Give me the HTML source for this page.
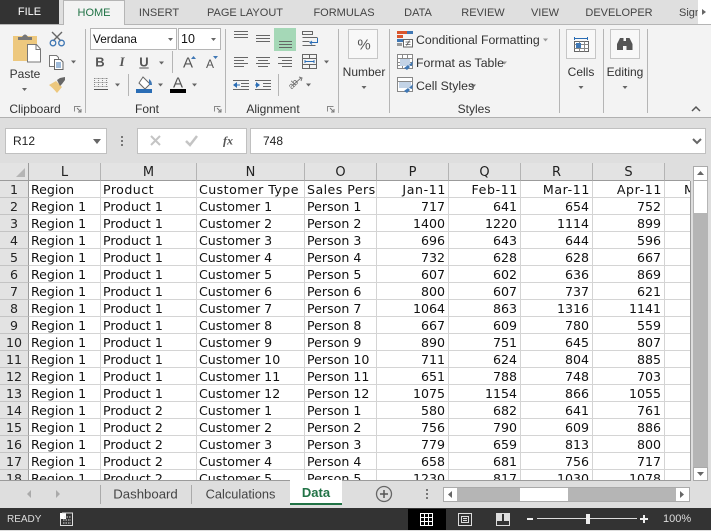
<!DOCTYPE html>
<html><head><meta charset="utf-8">
<style>
html,body{margin:0;padding:0;width:711px;height:530px;overflow:hidden;background:#dedede;font-family:"Liberation Sans",sans-serif;color:#333}
.a{position:absolute;white-space:nowrap}
.t{position:absolute;top:0;height:25px;line-height:26px;font-size:11px;color:#444;transform:translateX(-50%);white-space:nowrap}
.r{position:absolute;font-size:12px;color:#333;white-space:nowrap;transform:translate(-50%,-50%)}
.l{position:absolute;font-size:12.3px;color:#333;white-space:nowrap;transform:translateY(-50%)}
#grid{position:absolute;left:0;top:163px;width:690px;height:317px;overflow:hidden;background:#fff}
table{border-collapse:separate;border-spacing:0;table-layout:fixed;width:692px;font-family:"DejaVu Sans",Verdana,sans-serif;font-size:12.6px;color:#111}
th{background:#e3e3e3;font-weight:normal;height:18px;padding:2px 0 0;border-right:1px solid #b4b4b4;border-bottom:1px solid #9b9b9b;font-size:13px;line-height:15px;text-align:center;color:#222;box-sizing:border-box}
td{height:17px;box-sizing:border-box;padding:2px 2px 0;border-right:1px solid #d4d4d4;border-bottom:1px solid #d4d4d4;overflow:hidden;white-space:nowrap;line-height:14px}
td.h{background:#e3e3e3;text-align:center;padding:2px 0 0;border-right:1px solid #9b9b9b;border-bottom:1px solid #c4c4c4;color:#222}
td.n{text-align:right;padding-right:3px}
td.d{text-align:right;padding-right:2px;letter-spacing:.6px}
td.w{letter-spacing:.45px}
</style></head><body>

<!-- tab strip -->
<div class="a" style="left:0;top:0;width:711px;height:25px;background:#dfdfdf"></div>
<div class="a" style="left:0;top:0;width:59px;height:25px;background:#333;color:#fff;font-size:11px;line-height:25px;text-align:center">FILE</div>
<div class="a" style="left:63px;top:0;width:60px;height:25px;background:#f3f3f3;border:1px solid #b5b5b5;border-bottom:none"></div>
<div class="t" style="left:94px;color:#217346">HOME</div>
<div class="t" style="left:159px">INSERT</div>
<div class="t" style="left:245px">PAGE LAYOUT</div>
<div class="t" style="left:344px">FORMULAS</div>
<div class="t" style="left:418px">DATA</div>
<div class="t" style="left:483px">REVIEW</div>
<div class="t" style="left:545px">VIEW</div>
<div class="t" style="left:619px">DEVELOPER</div>
<div class="t" style="left:690px">Sign</div>
<div class="a" style="left:698px;top:0;width:13px;height:24px;background:#fff"></div>

<!-- ribbon -->
<div class="a" style="left:0;top:24px;width:63px;height:1px;background:#b5b5b5"></div>
<div class="a" style="left:125px;top:24px;width:586px;height:1px;background:#b5b5b5"></div>
<div class="a" style="left:0;top:25px;width:711px;height:92px;background:#f3f3f3;border-bottom:1px solid #b0b0b0"></div>
<div class="a" style="left:64px;top:24px;width:59px;height:2px;background:#f3f3f3"></div>

<svg class="a" style="left:0;top:0" width="711" height="120" viewBox="0 0 711 120" fill="none">
<!-- separators -->
<g fill="#b5b5b5">
<rect x="85" y="29" width="1" height="84"/><rect x="225" y="29" width="1" height="84"/><rect x="338" y="29" width="1" height="84"/><rect x="389" y="29" width="1" height="84"/><rect x="559" y="29" width="1" height="84"/><rect x="603" y="29" width="1" height="84"/><rect x="647" y="29" width="1" height="84"/>
<rect x="172" y="51" width="1" height="22"/><rect x="128" y="74" width="1" height="22"/><rect x="278" y="74" width="1" height="22"/>
</g>
<!-- tab scroll arrow -->
<path d="M702 9l4 3-4 3z" fill="#666"/>
<!-- paste -->
<rect x="13" y="36" width="24" height="25" fill="#edc87e"/>
<path d="M18 40v-3h4q3-5 6 0h4v3z" fill="#777"/>
<path d="M27.500 44.500h9l4 4.500v13h-13z" fill="#fff" stroke="#777"/>
<path d="M36 44.500v5h4.500" stroke="#777"/>
<!-- scissors -->
<path d="M52 32l9 9M62 32l-9 9" stroke="#666" stroke-width="1.400"/>
<circle cx="53" cy="43" r="2.800" stroke="#3f77b4" stroke-width="1.300"/><circle cx="61.500" cy="43" r="2.800" stroke="#3f77b4" stroke-width="1.300"/>
<!-- copy -->
<path d="M49.500 55.500h7l2 2v9h-9z" fill="#fff" stroke="#777"/>
<path d="M54.500 59.500h6l2.500 2.500v7.500h-8.500z" fill="#fff" stroke="#666"/>
<path d="M56 63h5M56 65h5M56 67h5" stroke="#3f77b4"/>
<!-- brush -->
<path d="M49 85l7-4 6 6-5 6q-4-5-8-8z" fill="#edc87e"/>
<path d="M57 80l3-2 5-1 0 3-3 4-2 2z" fill="#666"/>
<!-- borders -->
<path d="M94.500 78.500h13M94.500 82.500h13M94.500 86.500h13M94.500 78v9M98.500 78v9M102.500 78v9M106.500 78v9" stroke="#888" stroke-dasharray="1 1"/>
<rect x="94" y="89" width="14" height="1" fill="#555"/>
<!-- fill colour -->
<path d="M143 77l7 7-5 5-6-6z" fill="#fff" stroke="#666"/>
<path d="M149 79q3 2 3 6h-3z" fill="#3f77b4"/>
<rect x="136" y="89" width="16" height="4" fill="#2a6db5"/>
<!-- font colour bar -->
<rect x="170" y="89" width="16" height="4" fill="#000"/>
<!-- size arrows -->
<path d="M191 59l2.500-3 2.500 3z" fill="#3f77b4"/><path d="M213 56l2.500 3 2.500-3z" fill="#3f77b4"/>
<!-- carets -->
<g fill="#666">
<path d="M168 38.500h5l-2.500 3zM211 38.500h5l-2.500 3zM159 61.500h5l-2.500 3zM71 60.500h5l-2.500 3zM115 83.500h5l-2.500 3zM158 83.500h5l-2.500 3zM192 83.500h5l-2.500 3zM22 88h5l-2.500 3zM324 60.500h5l-2.500 3zM306 83.500h5l-2.500 3zM361.500 86h5l-2.500 3zM578.500 86h5l-2.500 3zM622.500 86h5l-2.500 3zM471 84.500h5l-2.500 3z"/>
</g>
<path d="M543 38.500h5l-2.500 3zM502 61.500h5l-2.500 3z" fill="#999"/>
<!-- launchers -->
<g stroke="#777"><path d="M74.500 111.500v-5h6M214.500 111.500v-5h6M327.500 111.500v-5h6" stroke="#888"/><path d="M77 108l4 4M81 109v3h-3M217 108l4 4M221 109v3h-3M330 108l4 4M334 109v3h-3"/></g>
<!-- alignment highlight -->
<rect x="274" y="28" width="22" height="23" fill="#a5d8b7"/>
<g stroke="#666">
<path d="M234 31.500h14M234 34.500h14M234 37.500h14"/>
<path d="M256 35.500h14M256 38.500h14M256 41.500h14"/>
<path d="M279 41.500h13M279 44.500h13M279 47.500h13"/>
<path d="M234 57.500h14M234 60.500h10M234 63.500h14M234 66.500h10"/>
<path d="M256 57.500h14M258 60.500h10M256 63.500h14M258 66.500h10"/>
<path d="M278 57.500h14M282 60.500h10M278 63.500h14M282 66.500h10"/>
<path d="M241 83.500h8M241 86.500h8M233 80.500h16M233 89.500h16"/>
<path d="M263 83.500h8M263 86.500h8M255 80.500h16M255 89.500h16"/>
<!-- wrap -->
<path d="M302.500 31.500h10v3h-10zM302.500 37.500h15M302.500 41.500h7M302.500 45.500h13"/>
<!-- merge -->
<rect x="302.500" y="54.500" width="14" height="14"/>
<path d="M302.500 58.500h14M302.500 64.500h14M309.500 54.500v4M309.500 64.500v4"/>
</g>
<path d="M317.500 38v4.500h-7M312 41l-2 1.500 2 2" stroke="#2a6db5"/>
<path d="M305 61.500h9M305 60v3M314 60v3" stroke="#2a6db5"/>
<path d="M233 85l4-3v6zM237 84.500h3v1h-3z" fill="#2a6db5"/>
<path d="M260 85l-4-3v6zM255 84.500h1v1h-1z" fill="#2a6db5"/>
<!-- orientation -->
<path d="M293 85l8-7M299 77l3 1-1 3" stroke="#777"/>
<!-- number box -->
<rect x="348.500" y="29.500" width="29" height="29" fill="#f8f8f8" stroke="#c6c6c6"/>
<!-- cells box -->
<rect x="566.500" y="29.500" width="29" height="29" fill="#f8f8f8" stroke="#c6c6c6"/>
<path d="M574.500 37v3M587.500 37v3M575 38.500h12" stroke="#2a6db5"/>
<rect x="574.500" y="41.500" width="14" height="10" fill="#fff" stroke="#666"/>
<path d="M574.500 44.500h14M574.500 48.500h14M579.500 41.500v10M584.500 41.500v10" stroke="#888"/>
<rect x="576" y="43" width="5" height="5" fill="#3f77b4"/>
<!-- editing box -->
<rect x="610.500" y="29.500" width="29" height="29" fill="#f8f8f8" stroke="#c6c6c6"/>
<path d="M620 38h3.500v3h2.500v-3h3.500l3 6v6h-6v-4h-3.500v4h-6v-6z" fill="#555"/>
<!-- styles icons -->
<rect x="397" y="31" width="10" height="3" fill="#d9552d"/><rect x="407" y="31" width="6" height="3" fill="#3f77b4"/>
<rect x="397" y="35" width="6" height="3" fill="#d9552d"/><rect x="397" y="39" width="6" height="3" fill="#3f77b4"/><rect x="397" y="43" width="5" height="3" fill="#999"/>
<rect x="403.500" y="39.500" width="9" height="7.500" fill="#fff" stroke="#666"/>
<path d="M405.500 42h5M405.500 44.500h5M409.500 40.500l-3 5" stroke="#555" stroke-width=".8"/>
<g stroke="#888"><rect x="397.500" y="54.500" width="15" height="14" fill="#fff"/><path d="M397.500 58.500h15M397.500 62.500h15M397.500 65.500h15M402.500 54.500v14M407.500 54.500v14"/>
<rect x="397.500" y="77.500" width="15" height="14" fill="#fff"/><path d="M397.500 81.500h15"/></g>
<rect x="400" y="59" width="10" height="7" fill="#c3d3e6"/><rect x="399" y="82" width="12" height="6" fill="#c3d3e6"/>
<path d="M404 68l4-3 2 2-3 3zM409 65l4-4-1 5zM404 91l4-3 2 2-3 3zM409 88l4-4-1 5z" fill="#3f77b4"/>
<!-- collapse -->
<path d="M692 111l4-4 4 4" stroke="#555" stroke-width="1.500"/>
</svg>

<!-- font boxes -->
<div class="a" style="left:90px;top:28px;width:87px;height:22px;box-sizing:border-box;border:1px solid #b5b5b5;background:#fff;font:11.800px/20px 'Liberation Sans',sans-serif;color:#111;padding-left:2px">Verdana</div>
<div class="a" style="left:178px;top:28px;width:43px;height:22px;box-sizing:border-box;border:1px solid #b5b5b5;background:#fff;font:12.500px/20px 'Liberation Sans',sans-serif;color:#111;padding-left:2px">10</div>
<svg class="a" style="left:160px;top:34px" width="60" height="10"><path d="M8 4h5l-2.500 3zM51 4h5l-2.500 3z" fill="#666"/></svg>

<div class="r" style="left:100px;top:62px;font-weight:bold;font-size:13px;color:#555">B</div>
<div class="r" style="left:122px;top:62px;font-style:italic;font-size:13px;font-family:'Liberation Serif',serif;color:#555;font-weight:bold">I</div>
<div class="r" style="left:144px;top:62px;font-size:13px;text-decoration:underline;color:#555;font-weight:bold">U</div>
<div class="r" style="left:188px;top:63px;font-size:15px;color:#555">A</div>
<div class="r" style="left:210px;top:64px;font-size:12px;color:#555">A</div>
<div class="r" style="left:178px;top:83px;font-size:15px;color:#555">A</div>
<div class="r" style="left:293px;top:84px;font-size:9px;color:#666;transform:translate(-50%,-50%) rotate(-45deg)">ab</div>

<div class="r" style="left:25px;top:74px">Paste</div>
<div class="r" style="left:35px;top:109px">Clipboard</div>
<div class="r" style="left:147px;top:109px">Font</div>
<div class="r" style="left:273px;top:109px">Alignment</div>
<div class="r" style="left:474px;top:109px">Styles</div>
<div class="r" style="left:364px;top:45px;font-size:15px;color:#555">%</div>
<div class="r" style="left:364px;top:72px">Number</div>
<div class="r" style="left:581px;top:72px">Cells</div>
<div class="r" style="left:625px;top:72px">Editing</div>
<div class="l" style="left:416px;top:40px">Conditional Formatting</div>
<div class="l" style="left:416px;top:63px">Format as Table</div>
<div class="l" style="left:416px;top:86px">Cell Styles</div>

<!-- formula bar -->
<div class="a" style="left:5px;top:128px;width:102px;height:26px;box-sizing:border-box;border:1px solid #c0c0c0;background:#fff;font-size:12px;line-height:25px;padding-left:7px;color:#222">R12</div>
<div class="a" style="left:137px;top:128px;width:110px;height:26px;box-sizing:border-box;border:1px solid #c0c0c0;background:#fff"></div>
<div class="a" style="left:250px;top:128px;width:456px;height:26px;box-sizing:border-box;border:1px solid #c0c0c0;background:#fff;font-size:12px;line-height:25px;padding-left:12px;color:#222">748</div>
<svg class="a" style="left:0;top:125px" width="711" height="35" fill="none">
<path d="M93 14h8l-4 5z" fill="#666"/>
<rect x="121" y="11" width="2" height="2" fill="#777"/><rect x="121" y="15" width="2" height="2" fill="#777"/><rect x="121" y="19" width="2" height="2" fill="#777"/>
<path d="M151 11l9 9M160 11l-9 9" stroke="#c4c4c4" stroke-width="2"/>
<path d="M186 16l4 4 7-9" stroke="#c4c4c4" stroke-width="2.500"/>
<path d="M693 14l4 4 4-4" stroke="#666" stroke-width="2"/>
</svg>
<div class="r" style="left:228px;top:141px;font:italic bold 12px 'Liberation Serif',serif;color:#555">fx</div>

<!-- grid -->
<div id="grid">
<table>
<colgroup><col style="width:29px"><col style="width:72px"><col style="width:96px"><col style="width:108px"><col style="width:72px"><col style="width:72px"><col style="width:72px"><col style="width:72px"><col style="width:72px"><col style="width:27px"></colgroup>
<tr><th style="border-right-color:#9b9b9b"></th><th>L</th><th>M</th><th>N</th><th>O</th><th>P</th><th>Q</th><th>R</th><th>S</th><th></th></tr>
<tr><td class="h">1</td><td>Region</td><td class="w">Product</td><td class="w">Customer Type</td><td class="w">Sales Pers</td><td class="d">Jan-11</td><td class="d">Feb-11</td><td class="d">Mar-11</td><td class="d">Apr-11</td><td style="padding-left:19px">M</td></tr>
<tr><td class="h">2</td><td>Region 1</td><td>Product 1</td><td>Customer 1</td><td>Person 1</td><td class="n">717</td><td class="n">641</td><td class="n">654</td><td class="n">752</td><td></td></tr>
<tr><td class="h">3</td><td>Region 1</td><td>Product 1</td><td>Customer 2</td><td>Person 2</td><td class="n">1400</td><td class="n">1220</td><td class="n">1114</td><td class="n">899</td><td></td></tr>
<tr><td class="h">4</td><td>Region 1</td><td>Product 1</td><td>Customer 3</td><td>Person 3</td><td class="n">696</td><td class="n">643</td><td class="n">644</td><td class="n">596</td><td></td></tr>
<tr><td class="h">5</td><td>Region 1</td><td>Product 1</td><td>Customer 4</td><td>Person 4</td><td class="n">732</td><td class="n">628</td><td class="n">628</td><td class="n">667</td><td></td></tr>
<tr><td class="h">6</td><td>Region 1</td><td>Product 1</td><td>Customer 5</td><td>Person 5</td><td class="n">607</td><td class="n">602</td><td class="n">636</td><td class="n">869</td><td></td></tr>
<tr><td class="h">7</td><td>Region 1</td><td>Product 1</td><td>Customer 6</td><td>Person 6</td><td class="n">800</td><td class="n">607</td><td class="n">737</td><td class="n">621</td><td></td></tr>
<tr><td class="h">8</td><td>Region 1</td><td>Product 1</td><td>Customer 7</td><td>Person 7</td><td class="n">1064</td><td class="n">863</td><td class="n">1316</td><td class="n">1141</td><td></td></tr>
<tr><td class="h">9</td><td>Region 1</td><td>Product 1</td><td>Customer 8</td><td>Person 8</td><td class="n">667</td><td class="n">609</td><td class="n">780</td><td class="n">559</td><td></td></tr>
<tr><td class="h">10</td><td>Region 1</td><td>Product 1</td><td>Customer 9</td><td>Person 9</td><td class="n">890</td><td class="n">751</td><td class="n">645</td><td class="n">807</td><td></td></tr>
<tr><td class="h">11</td><td>Region 1</td><td>Product 1</td><td>Customer 10</td><td>Person 10</td><td class="n">711</td><td class="n">624</td><td class="n">804</td><td class="n">885</td><td></td></tr>
<tr><td class="h">12</td><td>Region 1</td><td>Product 1</td><td>Customer 11</td><td>Person 11</td><td class="n">651</td><td class="n">788</td><td class="n">748</td><td class="n">703</td><td></td></tr>
<tr><td class="h">13</td><td>Region 1</td><td>Product 1</td><td>Customer 12</td><td>Person 12</td><td class="n">1075</td><td class="n">1154</td><td class="n">866</td><td class="n">1055</td><td></td></tr>
<tr><td class="h">14</td><td>Region 1</td><td>Product 2</td><td>Customer 1</td><td>Person 1</td><td class="n">580</td><td class="n">682</td><td class="n">641</td><td class="n">761</td><td></td></tr>
<tr><td class="h">15</td><td>Region 1</td><td>Product 2</td><td>Customer 2</td><td>Person 2</td><td class="n">756</td><td class="n">790</td><td class="n">609</td><td class="n">886</td><td></td></tr>
<tr><td class="h">16</td><td>Region 1</td><td>Product 2</td><td>Customer 3</td><td>Person 3</td><td class="n">779</td><td class="n">659</td><td class="n">813</td><td class="n">800</td><td></td></tr>
<tr><td class="h">17</td><td>Region 1</td><td>Product 2</td><td>Customer 4</td><td>Person 4</td><td class="n">658</td><td class="n">681</td><td class="n">756</td><td class="n">717</td><td></td></tr>
<tr><td class="h">18</td><td>Region 1</td><td>Product 2</td><td>Customer 5</td><td>Person 5</td><td class="n">1230</td><td class="n">817</td><td class="n">1030</td><td class="n">1078</td><td></td></tr>
</table>
<svg style="position:absolute;left:16px;top:5px" width="10" height="10"><path d="M9 0v9h-9z" fill="#b5b5b5"/></svg>
<div style="position:absolute;left:665px;top:0;width:25px;height:17px;background:#dedede"></div>
</div>
<div class="a" style="left:690px;top:181px;width:1px;height:299px;background:#9b9b9b"></div>

<!-- vertical scrollbar -->
<div class="a" style="left:693px;top:166px;width:15px;height:314px;background:#b5b5b5"></div>
<div class="a" style="left:693px;top:166px;width:15px;height:15px;box-sizing:border-box;background:#fff;border:1px solid #aaa"></div>
<div class="a" style="left:694px;top:181px;width:13px;height:32px;background:#fff"></div>
<div class="a" style="left:693px;top:467px;width:15px;height:14px;box-sizing:border-box;background:#fff;border:1px solid #aaa"></div>
<svg class="a" style="left:693px;top:166px" width="15" height="315"><path d="M4 9l3.500-4 3.500 4zM4 306l3.500 4 3.500-4z" fill="#666"/></svg>

<!-- sheet tabs -->
<div class="a" style="left:0;top:480px;width:691px;height:1px;background:#9b9b9b"></div>
<div class="a" style="left:100px;top:485px;width:1px;height:19px;background:#aaa"></div>
<div class="a" style="left:191px;top:485px;width:1px;height:19px;background:#aaa"></div>
<div class="a" style="left:290px;top:480px;width:52px;height:23px;background:#fff;border-bottom:2px solid #217346;color:#217346;font-size:13px;font-weight:bold;text-align:center;line-height:26px">Data</div>
<div class="r" style="left:145.500px;top:494px;font-size:13.200px;color:#444">Dashboard</div>
<div class="r" style="left:240.500px;top:494px;font-size:12.800px;color:#444">Calculations</div>
<svg class="a" style="left:0;top:481px" width="711" height="27" fill="none">
<path d="M31 9l-4 4 4 4z" fill="#aaa"/><path d="M56 9l4 4-4 4z" fill="#aaa"/>
<circle cx="384" cy="13" r="7.500" stroke="#666" stroke-width="1.300"/><path d="M380 13h8M384 9v8" stroke="#555" stroke-width="1.500"/>
<rect x="426" y="8" width="2" height="2" fill="#777"/><rect x="426" y="12" width="2" height="2" fill="#777"/><rect x="426" y="16" width="2" height="2" fill="#777"/>
</svg>
<div class="a" style="left:443px;top:487px;width:247px;height:15px;box-sizing:border-box;background:#b5b5b5;border:1px solid #aaa"></div>
<div class="a" style="left:444px;top:488px;width:13px;height:13px;background:#fff"></div>
<div class="a" style="left:676px;top:488px;width:13px;height:13px;background:#fff"></div>
<div class="a" style="left:520px;top:488px;width:48px;height:13px;background:#fff"></div>
<svg class="a" style="left:443px;top:487px" width="247" height="15"><path d="M9 4l-4 3.500 4 3.500zM237 4l4 3.500-4 3.500z" fill="#666"/></svg>

<!-- status bar -->
<div class="a" style="left:0;top:508px;width:711px;height:22px;background:#333"></div>
<div class="a" style="left:408px;top:509px;width:38px;height:21px;background:#000"></div>
<div class="a" style="left:7px;top:508px;height:22px;line-height:23px;font-size:10px;color:#ddd">READY</div>
<div class="a" style="left:663px;top:508px;height:22px;line-height:23px;font-size:11px;color:#ddd">100%</div>
<svg class="a" style="left:0;top:508px" width="711" height="22" fill="none">
<rect x="60" y="5" width="6" height="6" fill="#fff"/>
<path d="M62 5h10.500v12.500h-12v-7" stroke="#ddd"/>
<path d="M64 9h7M63 12h8M63 15h8" stroke="#ddd" stroke-dasharray="1.500 1"/>
<rect x="420.500" y="5.500" width="12" height="12" stroke="#fff"/><path d="M420.500 9.500h12M420.500 13.500h12M424.500 5.500v12M428.500 5.500v12" stroke="#fff"/>
<rect x="458.500" y="5.500" width="13" height="12" stroke="#ddd"/><path d="M461.500 8.500h7v6h-7zM463 10.500h4M463 12.500h4" stroke="#ddd"/>
<rect x="496.500" y="5.500" width="13" height="12" stroke="#ddd"/><rect x="497" y="5" width="5" height="8" fill="#ddd"/><rect x="504" y="5" width="5" height="8" fill="#ddd"/>
<rect x="527" y="10" width="6" height="2" fill="#eee"/>
<rect x="537" y="10" width="100" height="1" fill="#ddd"/>
<rect x="586" y="6" width="4" height="10" fill="#eee"/>
<path d="M640 11h8M644 7v8" stroke="#eee" stroke-width="2"/>
</svg>
</body></html>
